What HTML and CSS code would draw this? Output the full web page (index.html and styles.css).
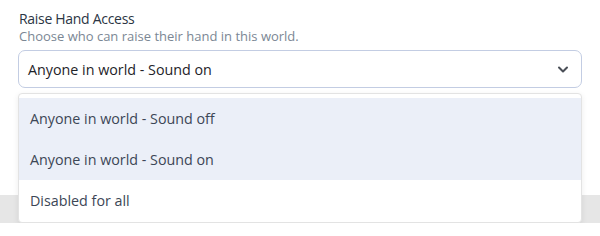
FILE: index.html
```html
<!DOCTYPE html>
<html lang="en">
<head>
    <meta charset="UTF-8">
    <meta name="viewport" content="width=device-width, initial-scale=1.0">
    <title>Raise Hand Access</title>
    <link rel="stylesheet" href="styles.css">
</head>
<body>
    <div class="setting">
        <!-- Heading -->
        <div class="label">Raise Hand Access</div>
        <div class="hint">Choose who can raise their hand in this world.</div>

        <!-- Select box -->
        <div class="select">
            <span class="value">Anyone in world - Sound on</span>
            <svg class="chevron" width="14" height="14" viewBox="0 0 14 14">
                <path d="M3 5.5 L7 9.5 L11 5.5" fill="none" stroke="#4a4f57" stroke-width="2" stroke-linecap="round" stroke-linejoin="round"/>
            </svg>
        </div>

        <!-- Open menu, over the next setting -->
        <div class="menu-wrap">
            <div class="next-row"></div>
            <div class="menu">
                <div class="option active">Anyone in world - Sound off</div>
                <div class="option active">Anyone in world - Sound on</div>
                <div class="option">Disabled for all</div>
            </div>
        </div>
    </div>
</body>
</html>
```

FILE: styles.css
```css
/* Page */
body {
    margin: 0;
    background: #ffffff;
    font-family: "Open Sans", sans-serif;
    overflow: hidden;
}

.setting {
    padding: 9px 18px 0 18px;
}

/* Heading */
.label {
    font-size: 14px;
    letter-spacing: -0.3px;
    color: #2b3544;
    line-height: 19px;
    padding-left: 1px;
}

.hint {
    font-size: 13px;
    color: #7b8794;
    line-height: 16px;
    padding-left: 1px;
}

/* Select box */
.select {
    margin-top: 6px;
    height: 36px;
    border: 1px solid #c3cde3;
    border-radius: 7px;
    display: flex;
    align-items: center;
    justify-content: space-between;
    padding: 0 10px 0 9px;
}

.value {
    font-size: 14.3px;
    color: #1e2329;
}

.chevron {
    margin-right: 1px;
}

/* Dropdown menu */
.menu-wrap {
    position: relative;
    margin-top: 5px;
}

.next-row {
    position: absolute;
    left: -40px;
    right: -40px;
    top: 102px;
    height: 28px;
    background: #e6e6e6;
    border-radius: 10px;
}

.menu {
    position: relative;
    background: #ffffff;
    border: 1px solid #e3e3e3;
    border-radius: 4px;
    box-shadow: 0 2px 6px rgba(0, 0, 0, 0.08);
    padding: 4px 0 1px 0;
}

.option {
    height: 41px;
    display: flex;
    align-items: center;
    padding: 0 11px;
    font-size: 14.3px;
    color: #3c4656;
}

.option.active {
    background: #ebeff8;
}
```
